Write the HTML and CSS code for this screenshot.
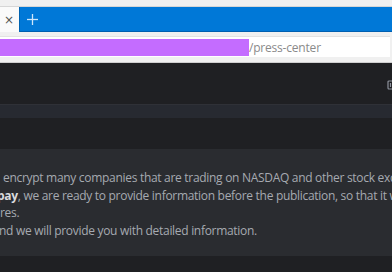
FILE: index.html
```html
<!DOCTYPE html>
<html lang="en">
<head>
  <meta charset="UTF-8">
  <meta name="viewport" content="width=device-width, initial-scale=1.0">
  <title>Press Center</title>
  <link rel="stylesheet" href="styles.css">
</head>
<body>
  <div class="browser">
    <div class="title-strip"></div>
    <div class="tab-row">
      <div class="tab">&times;</div>
      <div class="new-tab">
        <svg class="plus-icon" viewBox="0 0 12 12" fill="none" stroke="currentColor" stroke-width="1.4">
          <line x1="6" y1="0" x2="6" y2="12"></line>
          <line x1="0" y1="6" x2="12" y2="6"></line>
        </svg>
      </div>
    </div>
    <div class="toolbar">
      <div class="address-bar">
        <span class="address-mask"></span>
        <span class="address-path">/press-center</span>
      </div>
    </div>
  </div>

  <div class="page">
    <header class="site-header">
      <svg class="copy-icon" viewBox="0 0 10 10" fill="none" stroke="currentColor" stroke-width="1.2">
        <rect x="1" y="1" width="8" height="8" rx="1"></rect>
        <line x1="3.5" y1="3" x2="3.5" y2="7"></line>
      </svg>
    </header>
    <nav class="site-nav"></nav>
    <main class="content">
      <div class="notice">
        <div class="notice-line"><span class="shift-1">encrypt many companies that are trading on NASDAQ and other stock exch</span></div>
        <div class="notice-line"><span class="shift-2"><b>pay</b>, we are ready to provide information before the publication, so that it w</span></div>
        <div class="notice-line"><span>res.</span></div>
        <div class="notice-line"><span class="shift-3">nd we will provide you with detailed information.</span></div>
      </div>
    </main>
  </div>
</body>
</html>
```

FILE: styles.css
```css
* {
  margin: 0;
  padding: 0;
  box-sizing: border-box;
}

body {
  width: 392px;
  height: 272px;
  overflow: hidden;
  background-color: #1f2023;
  font-family: 'Open Sans', 'Segoe UI', sans-serif;
}

.browser {
  background-color: #f0f0f0;
}

.title-strip {
  height: 7px;
  border-bottom: 1px solid #d6d6d6;
}

.tab-row {
  display: flex;
  height: 25px;
}

.tab {
  width: 20px;
  background-color: #fafafa;
  color: #555;
  font-family: 'DejaVu Sans', sans-serif;
  font-size: 12px;
  line-height: 26px;
  padding-left: 4px;
  border-right: 1px solid #0063b1;
}

.new-tab {
  flex: 1;
  display: flex;
  align-items: center;
  padding-left: 7px;
  background-color: #0078d7;
  border-bottom: 1px solid #005fb0;
  color: #cfe6fa;
}

.plus-icon {
  width: 11px;
  height: 11px;
}

.toolbar {
  padding: 4px 2px 5px 0;
  border-bottom: 1px solid #cfcfcf;
}

.address-bar {
  display: flex;
  align-items: center;
  height: 21px;
  background-color: #fff;
  border-top: 1px solid #e2e2e2;
}

.address-mask {
  width: 249px;
  height: 17px;
  background-color: #c46cff;
}

.address-path {
  font-family: 'Open Sans', sans-serif;
  font-size: 12px;
  color: #8a8a8a;
  letter-spacing: -0.2px;
}

.page {
  display: flex;
  flex-direction: column;
}

.site-header {
  height: 41px;
  display: flex;
  justify-content: flex-end;
  align-items: center;
  padding-top: 3px;
  background-color: #1f2023;
}

.copy-icon {
  width: 10px;
  height: 10px;
  margin-right: -5px;
  color: #8c919b;
}

.site-nav {
  height: 14px;
  background-color: #272a31;
  border-top: 1px solid #2f3137;
}

.content {
  padding-top: 31px;
}

.notice {
  background-color: #2a2c30;
  padding: 20px 0 16px;
  height: 107px;
}

.notice-line {
  white-space: nowrap;
  overflow: hidden;
  font-size: 12px;
  line-height: 17.7px;
  letter-spacing: -0.3px;
  color: #a6aab1;
}

.notice-line b {
  color: #d9dbde;
  font-weight: 700;
}

.shift-1 {
  margin-left: 3px;
}

.shift-2 {
  margin-left: -3px;
}

.shift-3 {
  margin-left: -1px;
}
```
